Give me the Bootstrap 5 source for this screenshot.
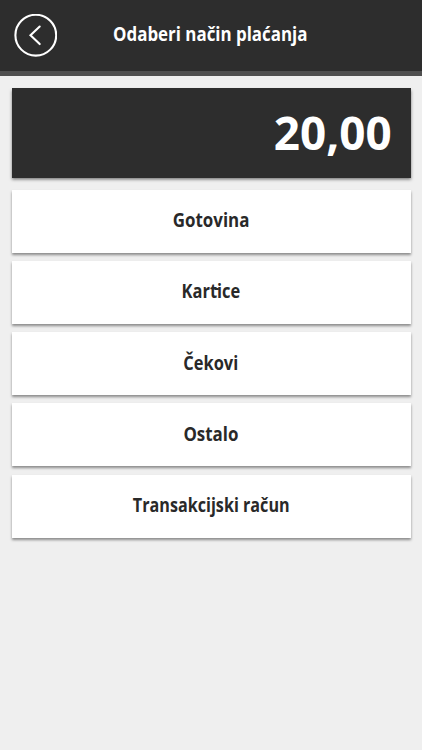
<!DOCTYPE html>
<html lang="hr">
<head>
<meta charset="utf-8">
<meta name="viewport" content="width=device-width, initial-scale=1">
<title>Odaberi način plaćanja</title>
<link href="https://cdn.jsdelivr.net/npm/bootstrap@5.3.0/dist/css/bootstrap.min.css" rel="stylesheet">
<style>
body { background: #efefef; color: #292929; font-family: "Open Sans", "Noto Sans", sans-serif; height: 750px; overflow: hidden; }
.topbar { height: 76px; background: #2d2d2d; border-bottom: 5px solid #4f4f4f; padding: 0 14px; }
.topbar h1 { font-size: 19px; line-height: 24px; padding-bottom: 3px; margin-right: 44px; }
.back { width: 43px; height: 43px; }
.payment { padding: 12px 11.5px 0; }
.amount { height: 89.5px; background: #2d2d2d; font-size: 46.5px; line-height: 1; padding: 0 19px 2px 0; box-shadow: 0 1.5px 3px rgba(0,0,0,.5); }
.amount span { transform: scaleX(.985); transform-origin: right; }
.method { height: 63px; font-size: 19px; line-height: 24px; color: #292929; padding: 0 0 2px; box-shadow: 0 2px 2.5px rgba(0,0,0,.42); }
.methods { margin-top: 12.3px; gap: 8.2px; }
.narrow { display: inline-block; white-space: nowrap; transform: scaleX(.89); }
.narrower { transform: scaleX(.865); }
.narrowest { transform: scaleX(.85); }
/* joins the crossbar of t to the following i */
.joined { position: relative; }
.joined::after { content: ""; position: absolute; left: 5px; top: 9.5px; width: 5px; height: 2px; background: currentColor; }
</style>
<script src="https://cdn.jsdelivr.net/npm/bootstrap@5.3.0/dist/js/bootstrap.bundle.min.js"></script>
</head>
<body>
<header class="topbar d-flex align-items-center">
  <a href="#" class="back d-flex flex-shrink-0" aria-label="Natrag">
    <svg width="43" height="43" viewBox="0 0 43 43" fill="none" stroke="#fff" stroke-width="2.1"><circle cx="21.8" cy="21.2" r="20.4"/><path d="M25.7 12.5 16.5 21.3l9.2 8.8" stroke-linecap="round"/></svg>
  </a>
  <h1 class="flex-grow-1 text-center text-white fw-bold mt-0 mb-0"><span class="narrow">Odaberi način plaćanja</span></h1>
</header>
<main class="payment">
  <div class="amount d-flex align-items-center justify-content-end text-white fw-bold"><span>20,00</span></div>
  <div class="methods d-flex flex-column">
    <button class="method btn bg-white border-0 rounded-0 fw-bold"><span class="narrow">Gotovina</span></button>
    <button class="method btn bg-white border-0 rounded-0 fw-bold"><span class="narrow narrower">Kar<span class="joined">t</span>ice</span></button>
    <button class="method btn bg-white border-0 rounded-0 fw-bold"><span class="narrow narrower">Čekovi</span></button>
    <button class="method btn bg-white border-0 rounded-0 fw-bold"><span class="narrow">Ostalo</span></button>
    <button class="method btn bg-white border-0 rounded-0 fw-bold"><span class="narrow narrowest">Transakcijski račun</span></button>
  </div>
</main>
</body>
</html>
